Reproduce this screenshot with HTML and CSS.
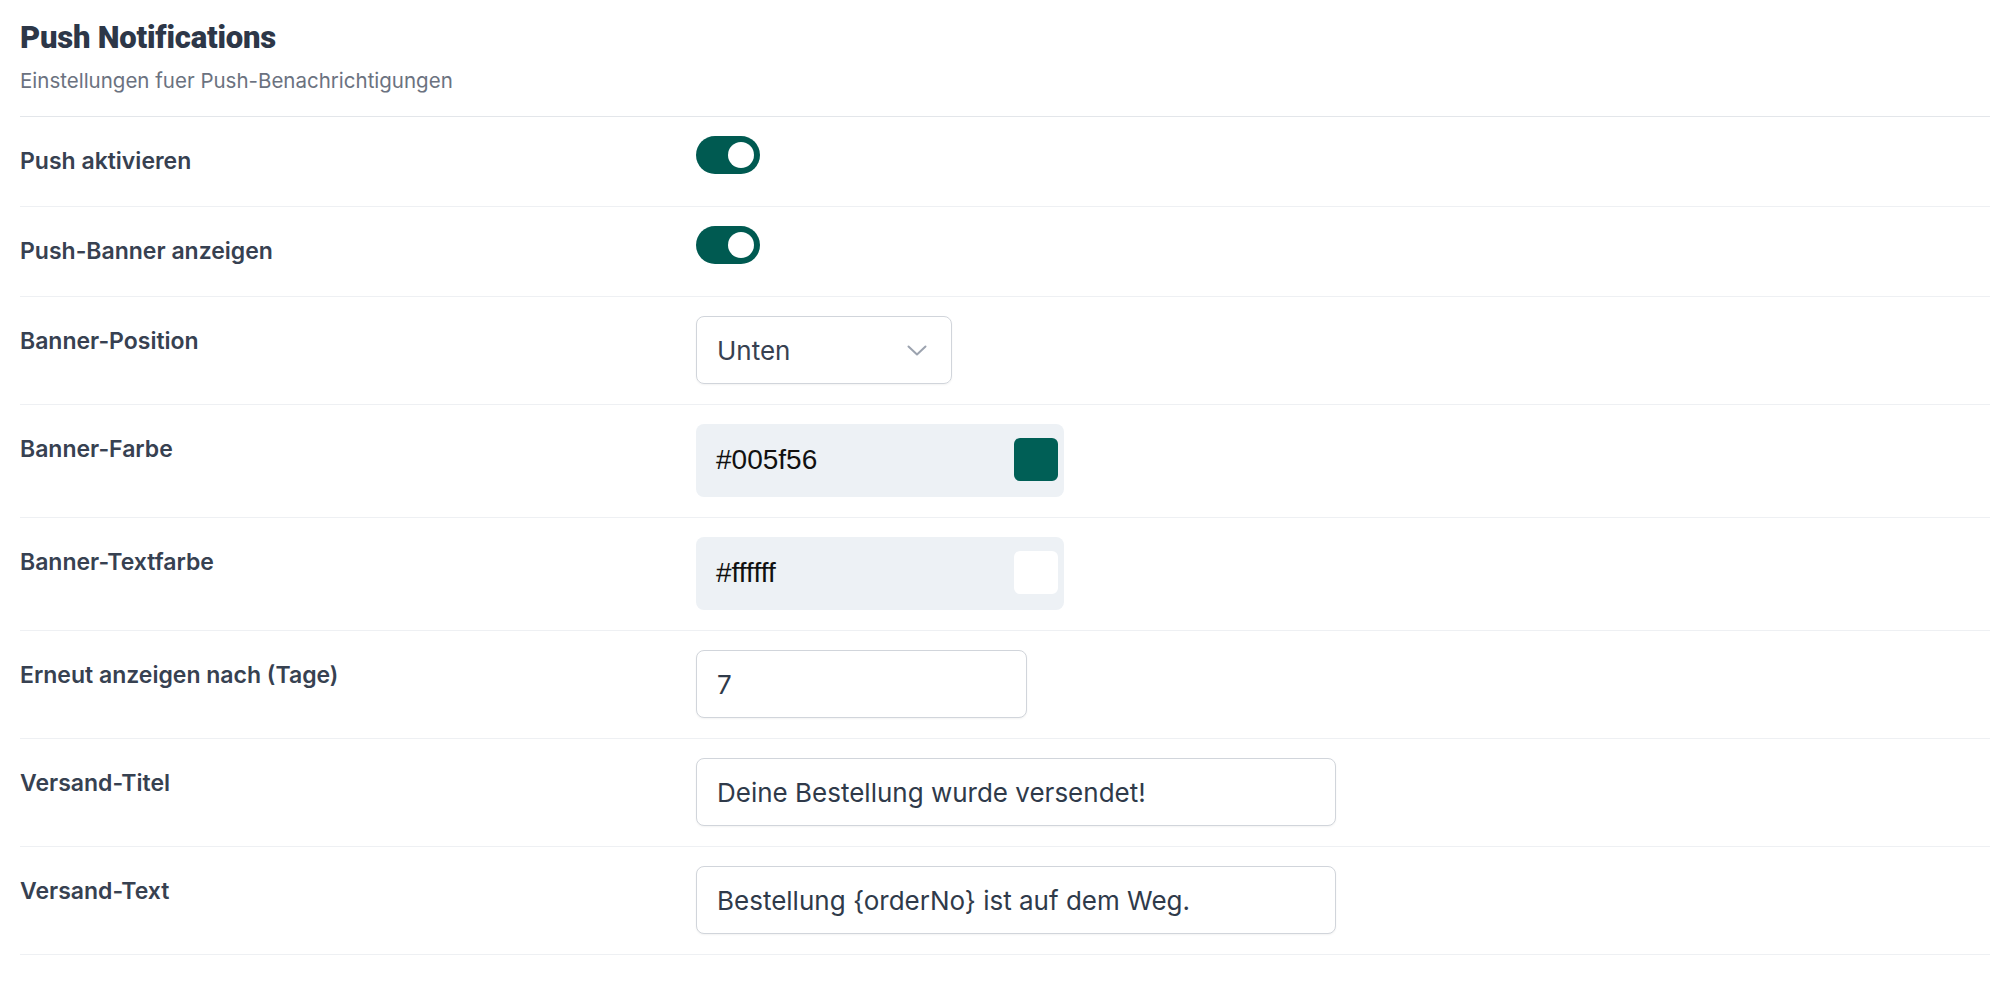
FILE: index.html
```html
<!DOCTYPE html>
<html lang="de">

<head>
    <meta charset="UTF-8">
    <title>Push Notifications</title>
    <link rel="stylesheet" href="styles.css">
</head>

<body>
    <section class="settings">
        <header class="settings-head">
            <h2>Push Notifications</h2>
            <p>Einstellungen fuer Push-Benachrichtigungen</p>
        </header>

        <div class="row">
            <label class="row-label">Push aktivieren</label>
            <div class="row-control"><span class="toggle is-on"><span class="knob"></span></span></div>
        </div>
        <div class="row">
            <label class="row-label">Push-Banner anzeigen</label>
            <div class="row-control"><span class="toggle is-on"><span class="knob"></span></span></div>
        </div>
        <div class="row">
            <label class="row-label">Banner-Position</label>
            <div class="row-control">
                <div class="select">
                    <span>Unten</span>
                    <svg width="20" height="11" viewBox="0 0 20 11" fill="none">
                        <path d="M1.5 1.5 L10 9.5 L18.5 1.5" stroke="#9ca3af" stroke-width="2" stroke-linecap="round" stroke-linejoin="round" />
                    </svg>
                </div>
            </div>
        </div>
        <div class="row">
            <label class="row-label">Banner-Farbe</label>
            <div class="row-control">
                <div class="color-field">
                    <span>#005f56</span>
                    <span class="swatch" style="background:#005f56;"></span>
                </div>
            </div>
        </div>
        <div class="row">
            <label class="row-label">Banner-Textfarbe</label>
            <div class="row-control">
                <div class="color-field">
                    <span>#ffffff</span>
                    <span class="swatch" style="background:#ffffff;"></span>
                </div>
            </div>
        </div>
        <div class="row">
            <label class="row-label">Erneut anzeigen nach (Tage)</label>
            <div class="row-control"><input class="field field-num" type="text" value="7"></div>
        </div>
        <div class="row">
            <label class="row-label">Versand-Titel</label>
            <div class="row-control"><input class="field" type="text" value="Deine Bestellung wurde versendet!"></div>
        </div>
        <div class="row">
            <label class="row-label">Versand-Text</label>
            <div class="row-control"><input class="field" type="text" value="Bestellung {orderNo} ist auf dem Weg."></div>
        </div>
    </section>
</body>

</html>
```

FILE: styles.css
```css
body {
    margin: 0;
    background: #fff;
    font-family: Inter, "Noto Sans", sans-serif;
    color: #374151;
}

.settings {
    margin: 0 16px 0 20px;
}

.settings-head {
    padding: 20px 0 21px;
    border-bottom: 1px solid #e3e6ea;
}

.settings-head h2 {
    margin: 0;
    font-family: Roboto, "Liberation Sans", sans-serif;
    font-size: 31px;
    line-height: 36px;
    font-weight: 900;
    color: #2d3748;
    letter-spacing: -0.2px;
}

.settings-head p {
    margin: 11px 0 0;
    font-size: 20.5px;
    line-height: 28px;
    color: #6b7280;
}

/* One setting per row */
.row {
    display: grid;
    grid-template-columns: 676px 1fr;
    align-items: start;
    padding: 19px 0 20px;
    border-bottom: 1px solid #eef0f3;
}

.row-label {
    font-size: 23px;
    font-weight: 600;
    line-height: 50px;
    color: #374151;
}

.row-control {
    display: flex;
}

/* Switch */
.toggle {
    width: 64px;
    height: 38px;
    border-radius: 19px;
    background: #005a51;
    display: flex;
    align-items: center;
    justify-content: flex-end;
    padding: 0 6px;
    box-sizing: border-box;
}

.knob {
    width: 26px;
    height: 26px;
    border-radius: 50%;
    background: #fff;
}

/* Select */
.select {
    width: 256px;
    height: 68px;
    box-sizing: border-box;
    border: 1px solid #d1d5db;
    border-radius: 8px;
    box-shadow: 0 1px 2px rgba(0, 0, 0, 0.05);
    display: flex;
    align-items: center;
    justify-content: space-between;
    padding: 0 24px 0 20px;
    font-size: 26px;
    color: #374151;
}

/* Colour picker */
.color-field {
    width: 368px;
    height: 73px;
    box-sizing: border-box;
    background: #edf1f5;
    border-radius: 8px;
    display: flex;
    align-items: center;
    justify-content: space-between;
    padding: 0 6px 2px 20px;
    font-family: "Liberation Sans", Arial, sans-serif;
    font-size: 28px;
    color: #111;
}

.swatch {
    width: 44px;
    height: 43px;
    border-radius: 6px;
}

/* Text inputs */
.field {
    width: 640px;
    height: 68px;
    box-sizing: border-box;
    border: 1px solid #d1d5db;
    border-radius: 8px;
    box-shadow: 0 1px 2px rgba(0, 0, 0, 0.05);
    padding: 0 20px;
    font-family: Inter, "Noto Sans", sans-serif;
    font-size: 26px;
    color: #2f3a4a;
    background: #fff;
    outline: none;
}

.field-num {
    width: 331px;
}
```
